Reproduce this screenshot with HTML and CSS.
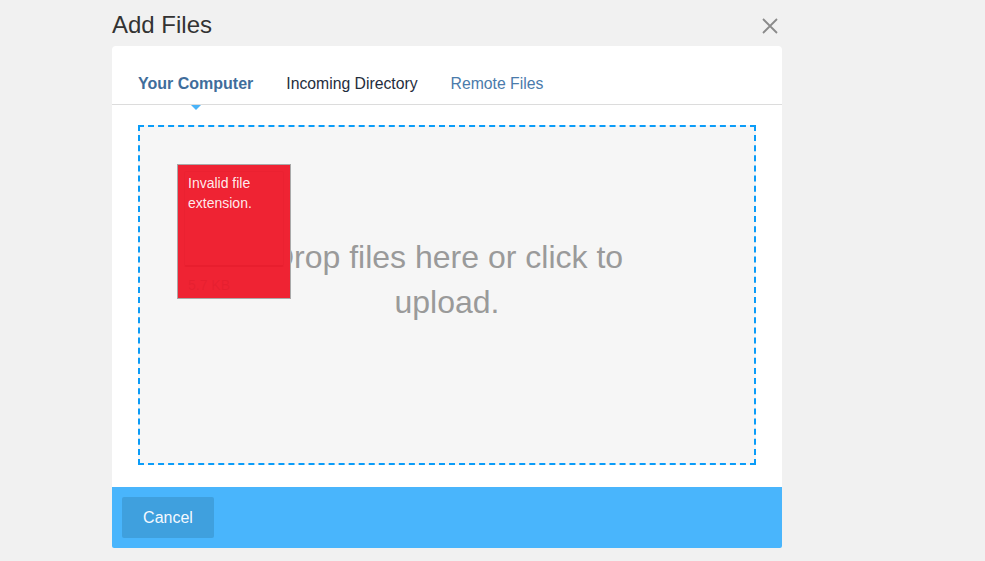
FILE: index.html
```html
<!DOCTYPE html>
<html lang="en">
<head>
<meta charset="utf-8">
<title>Add Files</title>
<link rel="stylesheet" href="styles.css">
</head>
<body>
<div class="page">
  <div class="dialog">
    <div class="dialog-header">
      <h1 class="dialog-title">Add Files</h1>
      <button class="close-btn" aria-label="Close">
        <svg width="16" height="16" viewBox="0 0 16 16"><path d="M1 1L15 15M15 1L1 15" stroke="#8a8a8a" stroke-width="1.8" fill="none"/></svg>
      </button>
    </div>
    <div class="modal">
      <ul class="tabs">
        <li class="tab active">Your Computer</li>
        <li class="tab dark">Incoming Directory</li>
        <li class="tab">Remote Files</li>
      </ul>
      <div class="modal-body">
        <div class="dropzone">
          <div class="dz-message">Drop files here or click to upload.</div>
          <div class="dz-preview">
            <div class="dz-inner"></div>
            <div class="dz-error">Invalid file extension.</div>
            <div class="dz-size">5.7 KB</div>
          </div>
        </div>
      </div>
      <div class="modal-footer">
        <button class="cancel-btn">Cancel</button>
      </div>
    </div>
  </div>
</div>
</body>
</html>
```
FILE: styles.css
```css
* { box-sizing: border-box; }
html, body { margin: 0; padding: 0; }
body {
  background: #f1f1f1;
  font-family: "Liberation Sans", Arial, sans-serif;
  height: 561px;
  overflow: hidden;
}
.page {
  padding-left: 112px;
}
.dialog {
  width: 670px;
}
.dialog-header {
  display: flex;
  justify-content: space-between;
  align-items: flex-start;
  height: 46px;
  padding-top: 11px;
}
.dialog-title {
  margin: 0;
  font-size: 24px;
  line-height: 28px;
  font-weight: normal;
  color: #333;
}
.close-btn {
  margin: 7px 4px 0 0;
  padding: 0;
  border: 0;
  background: none;
  width: 16px;
  height: 16px;
  display: block;
}
.close-btn svg { display: block; }
.modal {
  background: #fff;
  border-radius: 4px 4px 2px 2px;
  overflow: hidden;
}
.tabs {
  list-style: none;
  margin: 0;
  padding: 28px 26px 0;
  display: flex;
  gap: 33px;
  border-bottom: 1px solid #dcdcdc;
}
.tab {
  position: relative;
  font-size: 15.75px;
  line-height: 20px;
  padding-bottom: 10px;
  color: #4a7bab;
}
.tab.dark { color: #1f2d3d; }
.tab.active {
  font-size: 16px;
  font-weight: bold;
  color: #3f6d9b;
}
.tab.active::after {
  content: "";
  position: absolute;
  left: 50%;
  bottom: -6px;
  margin-left: -5px;
  border-left: 5px solid transparent;
  border-right: 5px solid transparent;
  border-top: 5px solid #4ab3f8;
}
.modal-body {
  padding: 20px 26px 22px;
}
.dropzone {
  position: relative;
  height: 340px;
  border: 2px dashed #0a9cf8;
  background: #f6f6f6;
  padding-top: 108px;
}
.dz-message {
  width: 390px;
  margin: 0 auto;
  text-align: center;
  font-size: 32px;
  line-height: 45px;
  color: #9a9a9a;
}
.dz-preview {
  position: absolute;
  left: 37px;
  top: 37px;
  width: 114px;
  height: 135px;
  background: #ef2333;
  border: 1px solid #a9a9a9;
  padding: 8px 10px;
}
.dz-inner {
  position: absolute;
  left: 6px;
  top: 6px;
  right: 6px;
  height: 96px;
  border: 1px solid rgba(180, 0, 20, 0.05);
  border-bottom: 2px solid rgba(180, 0, 20, 0.12);
  border-radius: 2px;
}
.dz-error {
  position: relative;
  font-size: 14px;
  line-height: 20px;
  color: rgba(255, 255, 255, 0.92);
}
.dz-size {
  position: absolute;
  left: 10px;
  top: 112px;
  font-size: 14px;
  line-height: 16px;
  color: rgba(200, 20, 35, 0.22);
}
.modal-footer {
  background: #49b5fc;
  height: 61px;
  padding: 10px;
}
.cancel-btn {
  display: block;
  width: 92px;
  height: 41px;
  border: 0;
  border-radius: 2px;
  background: #3fa0de;
  color: #f4f9ff;
  font-family: "Liberation Sans", Arial, sans-serif;
  font-size: 16px;
  line-height: 20px;
  padding: 1px 0 0;
}
```
